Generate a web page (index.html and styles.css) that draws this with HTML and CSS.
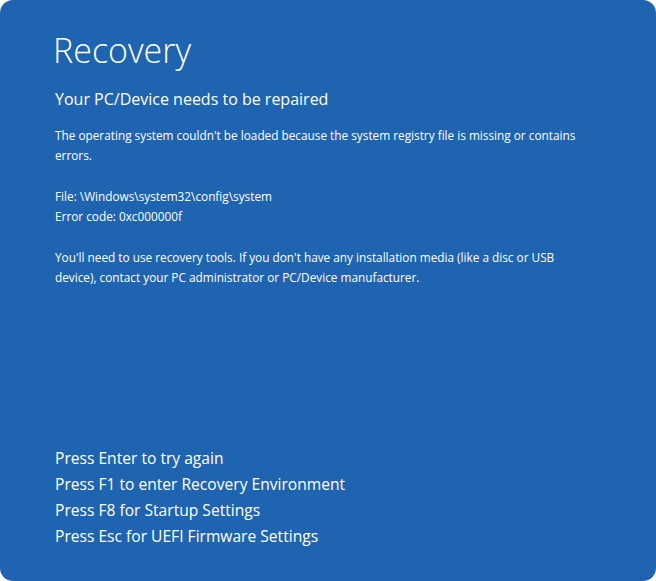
FILE: index.html
```html
<!DOCTYPE html>
<html lang="en">
<head>
  <meta charset="UTF-8" />
  <title>Recovery</title>
  <link rel="stylesheet" href="styles.css">
</head>
<body>
  <div class="screen">
    <div class="top">
      <h1 class="title">Recovery</h1>
      <h2 class="subtitle">Your PC/Device needs to be repaired</h2>
      <p class="text">The operating system couldn't be loaded because the system registry file is missing or contains errors.</p>
      <p class="text">File: \Windows\system32\config\system<br>Error code: 0xc000000f</p>
      <p class="text">You'll need to use recovery tools. If you don't have any installation media (like a disc or USB device), contact your PC administrator or PC/Device manufacturer.</p>
    </div>
    <ul class="keys">
      <li>Press Enter to try again</li>
      <li>Press F1 to enter Recovery Environment</li>
      <li>Press F8 for Startup Settings</li>
      <li>Press Esc for UEFI Firmware Settings</li>
    </ul>
  </div>
</body>
</html>
```

FILE: styles.css
```css
html, body {
  margin: 0;
  height: 100%;
  background: #fff;
}
.screen {
  box-sizing: border-box;
  height: 581px;
  background: #1f64b0;
  border-radius: 13px;
  color: #fff;
  font-family: 'Open Sans', 'Noto Sans', sans-serif;
  padding: 28px 61px 32px 55px;
  display: flex;
  flex-direction: column;
  justify-content: space-between;
}
.title {
  font-size: 34px;
  font-weight: 300;
  margin: 0 0 0 -2px;
  line-height: 44px;
}
.subtitle {
  font-size: 16px;
  font-weight: 400;
  margin: 15px 0 14px;
  line-height: 24px;
}
.text {
  font-size: 11.8px;
  line-height: 20.4px;
  margin: 0 0 20px;
}
.keys {
  list-style: none;
  margin: 0;
  padding: 0;
  font-size: 15.6px;
  line-height: 26px;
}
```
